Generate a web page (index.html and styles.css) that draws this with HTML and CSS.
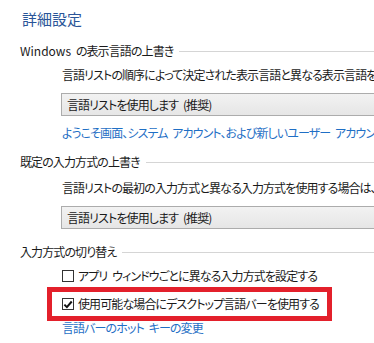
FILE: index.html
```html
<!DOCTYPE html>
<html>
<head>
<meta charset="utf-8">
<link rel="stylesheet" href="styles.css">
<title>詳細設定</title>
</head>
<body>
<div class="page">
<h1 class="title">詳細設定</h1>

<div class="group-head first"><span><span class="latin">Windows</span> の表示言語の上書き</span></div>
<p class="desc">言語リストの順序によって決定された表示言語と異なる表示言語を使用する場合は、ここで選択してください</p>
<div class="select">言語リストを使用します (推奨)</div>
<a class="link" href="#">ようこそ画面、システム アカウント、および新しいユーザー アカウントに言語設定を適用</a>

<div class="group-head"><span>既定の入力方式の上書き</span></div>
<p class="desc">言語リストの最初の入力方式と異なる入力方式を使用する場合は、ここで選択してください</p>
<div class="select">言語リストを使用します (推奨)</div>

<div class="group-head third"><span>入力方式の切り替え</span></div>
<label class="check-row">
  <span class="box"></span>
  <span>アプリ ウィンドウごとに異なる入力方式を設定する</span>
</label>
<div class="marked">
  <label class="check-row">
    <span class="box">
      <svg width="11" height="11" viewBox="0 0 11 11"><path d="M1.5 5.6 L4.3 8.4 L9.6 2.2" fill="none" stroke="#111" stroke-width="2.2"/></svg>
    </span>
    <span>使用可能な場合にデスクトップ言語バーを使用する</span>
  </label>
</div>
<a class="link last" href="#">言語バーのホット キーの変更</a>
</div>
</body>
</html>
```

FILE: styles.css
```css
html, body {
	margin: 0;
	padding: 0;
	background: white;
	overflow: hidden;
}
body {
	font-family: "Noto Sans CJK JP", "Noto Sans", sans-serif;
	font-size: 12px;
	color: #1a1a1a;
	font-feature-settings: "palt";
	letter-spacing: -0.9px;
	word-spacing: 3px;
}
.page {
	width: 374px;
	white-space: nowrap;
}
.title {
	margin: 8px 0 0 22px;
	height: 22px;
	line-height: 22px;
	font-size: 15px;
	font-weight: normal;
	letter-spacing: 0;
	color: #2a5598;
}
.latin {
	letter-spacing: 0;
}
.group-head {
	display: flex;
	align-items: center;
	margin: 13px 0 0 20px;
	height: 16px;
	line-height: 16px;
}
.group-head::after {
	content: "";
	flex: 1;
	height: 1px;
	margin-left: 6px;
	background: #d5d5d5;
}
.group-head.third {
	margin-top: 15px;
}
.desc {
	margin: 8px 0 0 62px;
	height: 16px;
	line-height: 16px;
}
.group-head:not(.first) + .desc {
	margin-top: 10px;
}
.select {
	box-sizing: border-box;
	margin: 10px 0 0 61px;
	width: 340px;
	height: 23px;
	line-height: 21px;
	padding-left: 5px;
	border: 1px solid #acacac;
	background: linear-gradient(#f2f2f2, #e6e6e6);
}
.link {
	display: block;
	margin: 9px 0 0 62px;
	height: 16px;
	line-height: 16px;
	color: #1f6fc5;
	text-decoration: none;
}
.link.last {
	margin-top: 0;
	height: 14px;
	line-height: 14px;
}
.check-row {
	display: flex;
	align-items: center;
	margin: 7px 0 0 62px;
	height: 17px;
	line-height: 17px;
}
.box {
	box-sizing: border-box;
	display: flex;
	align-items: center;
	justify-content: center;
	width: 12px;
	height: 12px;
	margin-right: 4px;
	border: 1px solid #333;
	background: white;
}
.marked {
	width: fit-content;
	margin: 3px 0 0 47px;
	padding: 0 8px 0 10px;
	border: 5px solid #e3202b;
}
.marked .check-row {
	margin: 0;
	height: 24px;
	line-height: 24px;
}
```
